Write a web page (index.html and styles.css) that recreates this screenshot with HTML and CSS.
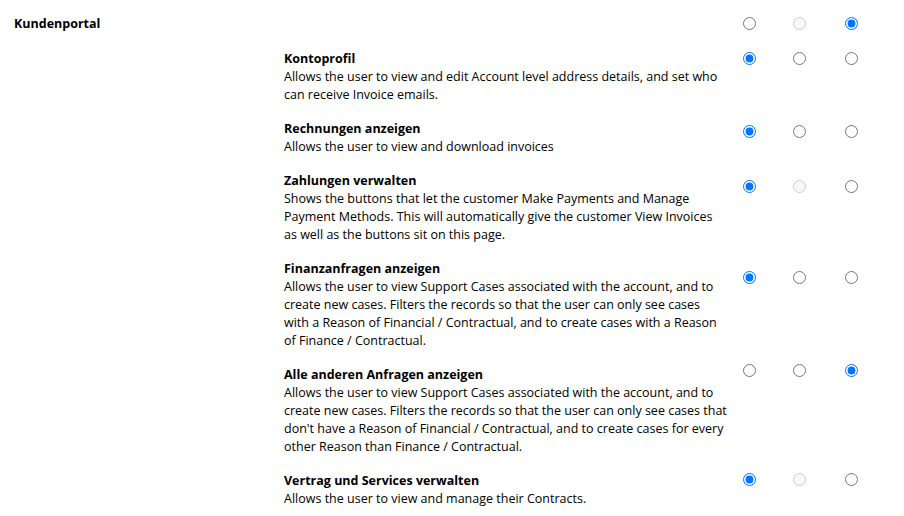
FILE: index.html
```html
<!DOCTYPE html>
<html>

<head>
    <title>Kundenportal - Berechtigungen</title>
    <link rel="stylesheet" href="styles.css">
</head>

<body>
    <div class="portal">
        <div class="row row-top">
            <div class="section-title">Kundenportal</div>
            <div class="choices">
                <input type="radio" name="portal">
                <input type="radio" name="portal" disabled>
                <input type="radio" name="portal" checked>
            </div>
        </div>

        <div class="row">
            <div class="perm">
                <div class="perm-name">Kontoprofil</div>
                <div class="perm-desc">Allows the user to view and edit Account level address details, and set who<br>
                    can receive Invoice emails.</div>
            </div>
            <div class="choices">
                <input type="radio" name="konto" checked>
                <input type="radio" name="konto">
                <input type="radio" name="konto">
            </div>
        </div>

        <div class="row">
            <div class="perm">
                <div class="perm-name">Rechnungen anzeigen</div>
                <div class="perm-desc">Allows the user to view and download invoices</div>
            </div>
            <div class="choices offset-3">
                <input type="radio" name="rechnungen" checked>
                <input type="radio" name="rechnungen">
                <input type="radio" name="rechnungen">
            </div>
        </div>

        <div class="row">
            <div class="perm">
                <div class="perm-name">Zahlungen verwalten</div>
                <div class="perm-desc">Shows the buttons that let the customer Make Payments and Manage<br>
                    Payment Methods. This will automatically give the customer View Invoices<br>
                    as well as the buttons sit on this page.</div>
            </div>
            <div class="choices offset-6">
                <input type="radio" name="zahlungen" checked>
                <input type="radio" name="zahlungen" disabled>
                <input type="radio" name="zahlungen">
            </div>
        </div>

        <div class="row">
            <div class="perm">
                <div class="perm-name">Finanzanfragen anzeigen</div>
                <div class="perm-desc">Allows the user to view Support Cases associated with the account, and to<br>
                    create new cases. Filters the records so that the user can only see cases<br>
                    with a Reason of Financial / Contractual, and to create cases with a Reason<br>
                    of Finance / Contractual.</div>
            </div>
            <div class="choices offset-9">
                <input type="radio" name="finanz" checked>
                <input type="radio" name="finanz">
                <input type="radio" name="finanz">
            </div>
        </div>

        <div class="row">
            <div class="perm">
                <div class="perm-name">Alle anderen Anfragen anzeigen</div>
                <div class="perm-desc">Allows the user to view Support Cases associated with the account, and to<br>
                    create new cases. Filters the records so that the user can only see cases that<br>
                    don't have a Reason of Financial / Contractual, and to create cases for every<br>
                    other Reason than Finance / Contractual.</div>
            </div>
            <div class="choices offset-up">
                <input type="radio" name="andere">
                <input type="radio" name="andere">
                <input type="radio" name="andere" checked>
            </div>
        </div>

        <div class="row">
            <div class="perm">
                <div class="perm-name">Vertrag und Services verwalten</div>
                <div class="perm-desc">Allows the user to view and manage their Contracts.</div>
            </div>
            <div class="choices offset-up-1">
                <input type="radio" name="vertrag" checked>
                <input type="radio" name="vertrag" disabled>
                <input type="radio" name="vertrag">
            </div>
        </div>
    </div>
</body>

</html>
```

FILE: styles.css
```css
body {
    font-family: 'Open Sans', 'Noto Sans', sans-serif;
    font-size: 12.5px;
    line-height: 18px;
    color: #000;
    background: #fff;
    margin: 0;
}

.portal {
    padding: 14px 0 0 14px;
}

.row {
    display: flex;
    align-items: flex-start;
    margin-bottom: 15px;
}

.row-top {
    margin-bottom: 16px;
}

.section-title {
    font-weight: bold;
    width: 724px;
    padding-top: 1px;
}

.perm {
    margin-left: 270px;
    width: 454px;
    padding-top: 1px;
    white-space: nowrap;
}

.perm-name {
    font-weight: bold;
}

.choices {
    display: grid;
    grid-template-columns: 50px 52px 50px;
}

.choices input[type="radio"] {
    margin: 3px 0 0 5px;
    width: 13px;
    height: 13px;
}

.offset-3 { padding-top: 3px; }
.offset-6 { padding-top: 6px; }
.offset-9 { padding-top: 9px; }
.offset-up { margin-top: -4px; }
.offset-up-1 { margin-top: -1px; }
```
